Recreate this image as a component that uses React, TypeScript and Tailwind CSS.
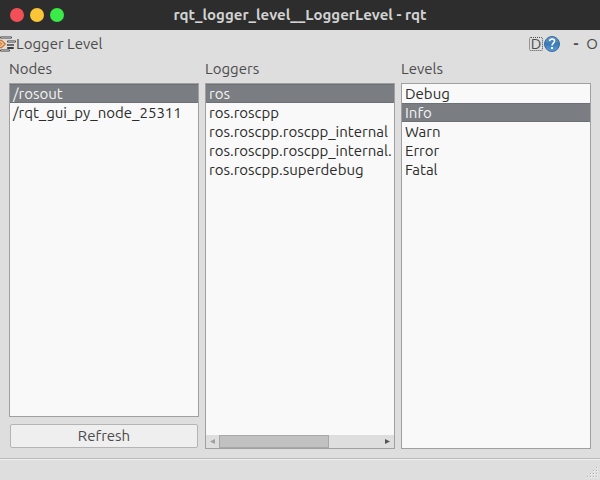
import React, { useState } from "react";

type ListProps = {
  label: string;
  items: string[];
  initial: number;
  children?: React.ReactNode;
  after?: React.ReactNode;
};

function ListColumn({ label, items, initial, children, after }: ListProps) {
  const [selected, setSelected] = useState(initial);
  const id = "list-" + label.toLowerCase();
  return (
    <section className="flex min-w-0 flex-1 flex-col">
      <h2 id={id} className="mb-[3px] h-[22px] text-[15px] leading-[22px] text-[#4c4c4c]">
        {label}
      </h2>
      <div className="flex min-h-0 flex-1 flex-col border border-[#a0a0a0] bg-[#f9f9f9]">
        <div role="listbox" aria-labelledby={id} className="flex flex-1 flex-col overflow-hidden">
          {items.map((item, i) => (
            <button
              key={item}
              type="button"
              role="option"
              aria-selected={i === selected}
              onClick={() => setSelected(i)}
              className={
                i === selected
                  ? "h-[19px] w-full overflow-hidden border-y border-[#6d7074] bg-[#7a7d81] px-[3px] text-left text-[15px] leading-[18px] whitespace-nowrap text-[#f4f4f4]"
                  : "h-[19px] w-full overflow-hidden border-y border-transparent px-[3px] text-left text-[15px] leading-[18px] whitespace-nowrap text-[#2c2c2c]"
              }
            >
              {item}
            </button>
          ))}
        </div>
        {children}
      </div>
      {after}
    </section>
  );
}

function DockIcon() {
  return (
    <svg width="16" height="16" viewBox="0 0 16 16" className="shrink-0" aria-hidden="true">
      <g stroke="#3c3c3c" strokeWidth="2" strokeLinecap="round">
        <path d="M1 1.5H11M8 5.5H15M8 9H13M8 12H13M1 14.5H9" />
      </g>
      <path d="M1 1.5H11M8 5.5H15M8 9H13M1 14.5H9" stroke="#b4b4b4" strokeWidth="0.8" />
      <path d="M0 4.5H1.5L5.2 8L1.5 11.5H0" fill="none" stroke="#d9761f" strokeWidth="1.4" />
      <path d="M0 6.5L1.8 8L0 9.5" fill="none" stroke="#d9761f" strokeWidth="1.2" />
    </svg>
  );
}

function HelpIcon() {
  return (
    <svg width="16" height="16" viewBox="0 0 16 16" aria-hidden="true">
      <defs>
        <linearGradient id="help" x1="0" y1="0" x2="0" y2="1">
          <stop offset="0" stopColor="#6b9cc8" />
          <stop offset="0.5" stopColor="#3a7ab6" />
          <stop offset="1" stopColor="#5b9fd8" />
        </linearGradient>
      </defs>
      <circle cx="8" cy="8" r="7.5" fill="url(#help)" stroke="#3a6c9e" />
      <path
        d="M5.6 5.1C5.8 3.7 6.8 3.1 8.1 3.1C9.6 3.1 10.5 3.9 10.5 5.2C10.5 7 8 7.2 8 9.4"
        fill="none"
        stroke="#fff"
        strokeWidth="1.5"
      />
      <rect x="7" y="11" width="2" height="2" fill="#fff" />
    </svg>
  );
}

function SizeGrip() {
  const dots = [[9, 0], [6, 3], [9, 3], [3, 6], [6, 6], [9, 6], [0, 9], [3, 9], [6, 9], [9, 9]];
  return (
    <svg width="11" height="11" viewBox="0 0 11 11" shapeRendering="crispEdges" aria-hidden="true">
      {dots.map(([x, y]) => (
        <g key={x + "-" + y}>
          <rect x={x} y={y} width="2" height="2" fill="#ececec" />
          <rect x={x} y={y} width="1" height="1" fill="#b0b0b0" />
        </g>
      ))}
    </svg>
  );
}

export default function App() {
  return (
    <div className="flex min-h-screen flex-col bg-[#2d2d2d] font-['Ubuntu','Noto_Sans',sans-serif] text-[15px]">
      <header className="grid h-[30px] grid-cols-[1fr_auto_1fr] items-center px-[10px]">
        <div className="flex gap-[6px]">
          <button type="button" aria-label="Close" className="size-[14px] rounded-full bg-[#f25056]" />
          <button type="button" aria-label="Minimize" className="size-[14px] rounded-full bg-[#fac536]" />
          <button type="button" aria-label="Maximize" className="size-[14px] rounded-full bg-[#39ea49]" />
        </div>
        <h1 className="text-[15px] leading-5 font-bold text-[#d2d2d2]">
          rqt_logger_level__LoggerLevel - rqt
        </h1>
      </header>

      <div className="flex flex-1 flex-col bg-[#dedede]">
        <div className="flex h-7 items-center justify-between pr-[2px] text-[#4c4c4c]">
          <div className="flex items-center">
            <DockIcon />
            <span className="leading-5">Logger Level</span>
          </div>
          <div className="flex items-center">
            <button
              type="button"
              className="mr-px flex h-[14px] w-[14px] items-center justify-center rounded-[2px] border border-dotted border-[#4c4c4c] text-[15px] leading-3"
            >
              D
            </button>
            <button type="button" aria-label="Help" className="size-4">
              <HelpIcon />
            </button>
            <button type="button" aria-label="Undock" className="ml-3 w-2 text-center leading-5 font-bold">
              -
            </button>
            <button type="button" className="ml-[6px] w-3 text-center leading-5">
              O
            </button>
          </div>
        </div>

        <main className="flex flex-1 gap-[6px] px-[9px] pb-[9px]">
          <ListColumn
            label="Nodes"
            items={["/rosout", "/rqt_gui_py_node_25311"]}
            initial={0}
            after={
              <button
                type="button"
                className="mx-px mt-[7px] mb-px h-6 rounded-[2px] border border-[#b4b4b4] bg-[#efefef] text-[15px] leading-[22px] text-[#4c4c4c]"
              >
                Refresh
              </button>
            }
          />
          <ListColumn
            label="Loggers"
            items={[
              "ros",
              "ros.roscpp",
              "ros.roscpp.roscpp_internal",
              "ros.roscpp.roscpp_internal.",
              "ros.roscpp.superdebug",
            ]}
            initial={0}
          >
            <div className="flex h-[13px] bg-[#dedede]">
              <button type="button" aria-label="Scroll left" className="flex w-[13px] items-center justify-center">
                <svg width="5" height="5" viewBox="0 0 5 5" aria-hidden="true">
                  <path d="M5 0V5L0 2.5Z" fill="#a0a0a0" />
                </svg>
              </button>
              <div className="flex flex-1">
                <div className="w-[68%] border border-[#a8a8a8] bg-[#c1c1c1]" />
              </div>
              <button type="button" aria-label="Scroll right" className="flex w-[13px] items-center justify-center">
                <svg width="5" height="5" viewBox="0 0 5 5" aria-hidden="true">
                  <path d="M0 0V5L5 2.5Z" fill="#555" />
                </svg>
              </button>
            </div>
          </ListColumn>
          <ListColumn label="Levels" items={["Debug", "Info", "Warn", "Error", "Fatal"]} initial={1} />
        </main>

        <footer className="flex h-[22px] items-end justify-end border-t border-[#bcbcbc] pr-[2px] pb-[2px] shadow-[inset_0_1px_0_#efefef]">
          <SizeGrip />
        </footer>
      </div>
    </div>
  );
}
